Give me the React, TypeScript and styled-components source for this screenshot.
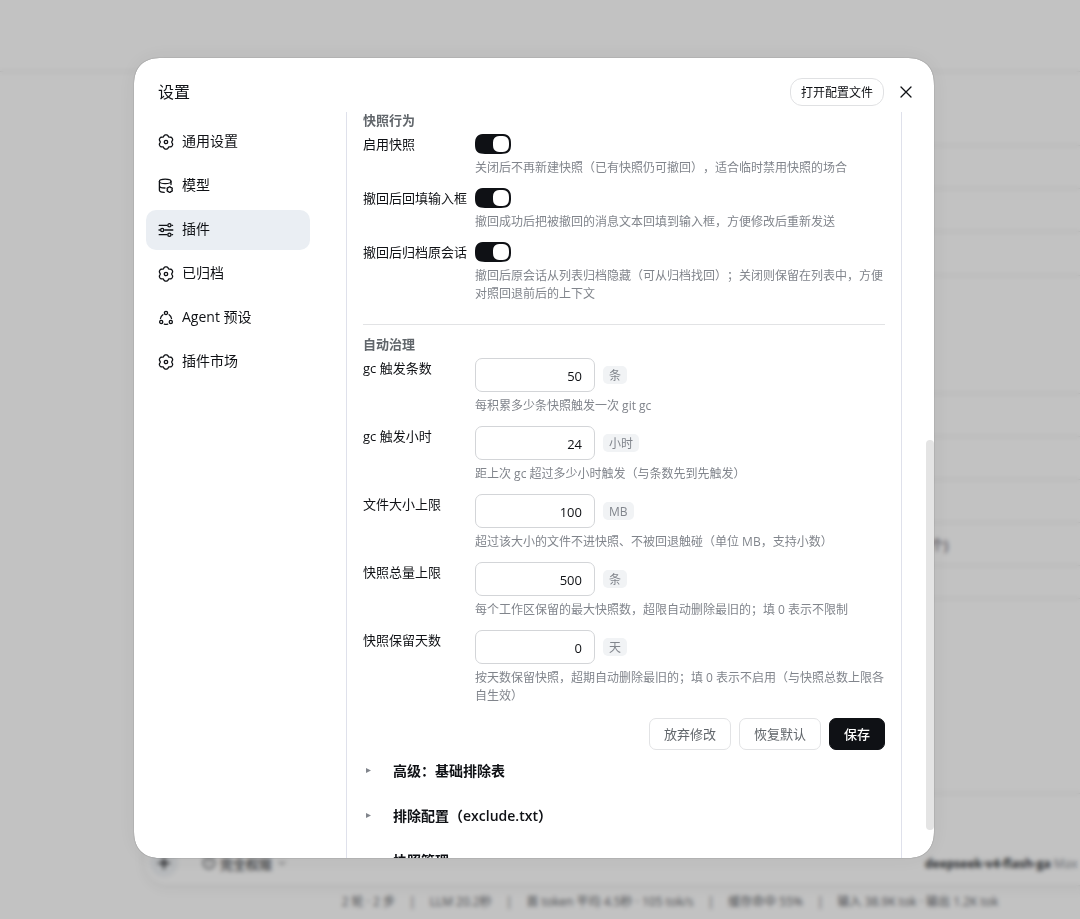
import React from "react";
import styled, { createGlobalStyle } from "styled-components";

const ink = "#0f1115";
const muted = "#81858c";
const secondary = "#61666b";
const panelLine = "#dfe1eb";

const GlobalStyle = createGlobalStyle`
  *, *::before, *::after { box-sizing: border-box; }
  body {
    margin: 0;
    background: #fff;
    color: ${ink};
    font-family: "Open Sans", "Noto Sans CJK SC", sans-serif;
    font-size: 14px;
    text-spacing-trim: space-all;
  }
  button, input { font: inherit; color: inherit; }
  h1, h2, p { margin: 0; }
`;

/* ---------- page behind the dialog ---------- */

const Page = styled.div`
  display: flex;
  flex-direction: column;
  height: 100vh;
  overflow: hidden;
`;

const TopBar = styled.header`
  flex: none;
  height: 72px;
  border-bottom: 1px solid #e6e6e6;
`;

const Thread = styled.main`
  flex: 1;
  min-height: 0;
  overflow: hidden;
  padding: 30px 0 0 170px;
`;

const ResultList = styled.ul`
  list-style: none;
  margin: 0;
  padding: 0;
`;

const ResultRow = styled.li<{ $h: number }>`
  display: flex;
  align-items: center;
  height: ${(p) => p.$h}px;
  padding-left: 760px;
  border-bottom: 1px solid #e9e9e9;
  color: #3a3244;
`;

const Composer = styled.section`
  flex: none;
  display: flex;
  align-items: flex-end;
  height: 93px;
  margin-left: 143px;
  margin-right: -60px;
  padding: 0 60px 8px 6px;
  border: 1px solid #eaeaea;
  border-radius: 24px;
  box-shadow: 0 4px 12px rgba(0, 0, 0, 0.04);
`;

const ComposerRow = styled.div`
  display: flex;
  align-items: center;
  flex: 1;
  height: 28px;
  font-size: 13px;
  white-space: nowrap;
`;

const RoundAdd = styled.span`
  display: grid;
  place-items: center;
  width: 28px;
  height: 28px;
  margin-right: 24px;
  border-radius: 50%;
  background: #f0f3f6;
`;

const Access = styled.span`
  display: flex;
  align-items: center;
  gap: 4px;
  font-weight: 500;
  color: #3f4347;
`;

const Model = styled.span`
  margin-left: auto;
  width: 154px;
  font-size: 12px;
  color: ${muted};

  b { color: #33363a; }
`;

const StatusBar = styled.footer`
  flex: none;
  display: flex;
  justify-content: center;
  gap: 14px;
  height: 33px;
  padding-left: 260px;
  font-size: 12px;
  line-height: 32px;
  color: #5f6368;
  white-space: nowrap;
`;

/* ---------- dialog ---------- */

const Overlay = styled.div`
  position: fixed;
  inset: 0;
  display: flex;
  align-items: flex-start;
  justify-content: center;
  padding: 58px 12px 0 0;
  background: rgba(0, 0, 0, 0.24);
  backdrop-filter: blur(2px);
`;

const Dialog = styled.section`
  display: flex;
  flex-direction: column;
  width: min(800px, 100%);
  height: min(800px, calc(100vh - 116px));
  overflow: hidden;
  border-radius: 28px;
  corner-shape: superellipse(1.3);
  background: #fff;
  box-shadow: 0 0 1px rgba(0, 0, 0, 0.6), 0 0 24px rgba(0, 0, 0, 0.06);
`;

const DialogHeader = styled.header`
  flex: none;
  display: flex;
  align-items: center;
  gap: 10px;
  padding: 20px 16px 6px 24px;
`;

const DialogTitle = styled.h1`
  flex: 1;
  font-size: 16px;
  line-height: 28px;
  font-weight: 400;
`;

const OpenConfig = styled.button`
  height: 28px;
  padding: 2px 10px 0;
  border: 1px solid #e0e1e3;
  border-radius: 12px;
  background: #fff;
  font-size: 12px;
  line-height: 24px;
`;

const CloseButton = styled.button`
  display: grid;
  place-items: center;
  width: 24px;
  height: 24px;
  padding: 0;
  border: 0;
  background: none;
`;

const DialogBody = styled.div`
  flex: 1;
  display: flex;
  min-height: 0;
`;

const Nav = styled.nav`
  flex: none;
  display: flex;
  flex-direction: column;
  gap: 4px;
  width: 212px;
  padding: 10px 36px 0 12px;
`;

const NavItem = styled.button<{ $active?: boolean }>`
  display: flex;
  align-items: center;
  gap: 8px;
  height: 40px;
  padding: 0 12px;
  border: 0;
  border-radius: 10px;
  background: ${(p) => (p.$active ? "#eaeef3" : "transparent")};
  text-align: left;
`;

const NavText = styled.span`
  padding-bottom: 2px;
  line-height: 20px;
`;

const Panel = styled.div`
  flex: 1;
  min-width: 0;
  overflow: hidden;
  padding: 0 16px;
  border: solid ${panelLine};
  border-width: 0 1px;
`;

const ScrollTrack = styled.div`
  flex: none;
  display: flex;
  flex-direction: column;
  align-items: flex-end;
  width: 32px;
  padding: 328px 0 28px;
`;

const ScrollThumb = styled.div`
  flex: 1;
  width: 8px;
  border-radius: 4px;
  background: #e4e4e4;
`;

const Section = styled.section`
  display: flex;
  flex-direction: column;
  gap: 11px;

  & + & {
    margin-top: 21px;
    padding-top: 11px;
    border-top: 1px solid #e2e3e5;
  }
`;

const SectionTitle = styled.h2`
  margin-bottom: -5px;
  font-size: 13px;
  line-height: 16px;
  font-weight: 600;
  color: ${secondary};
`;

const Field = styled.div`
  display: grid;
  grid-template-columns: 104px 1fr;
  column-gap: 8px;
`;

const FieldLabel = styled.label`
  font-size: 13px;
  line-height: 20px;
  white-space: nowrap;
`;

const FieldControl = styled.div`
  display: flex;
  flex-direction: column;
  gap: 5px;
`;

const Hint = styled.p`
  font-size: 12px;
  line-height: 18px;
  color: ${muted};
`;

const Switch = styled.input`
  appearance: none;
  display: block;
  width: 36px;
  height: 20px;
  margin: 0;
  padding: 2px;
  border-radius: 10px;
  corner-shape: superellipse(1.5);
  background: #d5d7da;

  &::before {
    content: "";
    display: block;
    width: 16px;
    height: 16px;
    border-radius: 8px;
    corner-shape: superellipse(1.5);
    background: #fff;
  }

  &:checked { background: ${ink}; }
  &:checked::before { margin-left: auto; }
`;

const NumberRow = styled.div`
  display: flex;
  align-items: center;
  gap: 8px;
`;

const NumberBox = styled.input`
  width: 120px;
  height: 34px;
  padding: 2px 12px 0;
  border: 1px solid #d3d5d8;
  border-radius: 7px;
  background: #fff;
  font-size: 13px;
  text-align: right;
`;

const Unit = styled.span`
  height: 18px;
  padding: 0 6px;
  border-radius: 5px;
  background: #f1f3f5;
  font-size: 12px;
  line-height: 20px;
  color: ${muted};
`;

const Actions = styled.div`
  display: flex;
  justify-content: flex-end;
  gap: 8px;
  margin-top: 13px;
`;

const ActionButton = styled.button<{ $primary?: boolean }>`
  height: 32px;
  padding: 0 14px 2px;
  border: 1px solid ${(p) => (p.$primary ? ink : "#e2e3e5")};
  border-radius: 7px;
  background: ${(p) => (p.$primary ? ink : "#fff")};
  color: ${(p) => (p.$primary ? "#fff" : secondary)};
  font-size: 13px;
  font-weight: ${(p) => (p.$primary ? 500 : 400)};
`;

const Fold = styled.details`
  summary {
    display: flex;
    align-items: center;
    gap: 22px;
    height: 45px;
    padding: 0 0 4px 3px;
    list-style: none;
    font-size: 14px;
    line-height: 20px;
    font-weight: 600;
  }
`;

/* ---------- icons ---------- */

const lobed = (cx: number, cy: number, r: number, depth: number) => {
  const steps = 72;
  const points = Array.from({ length: steps }, (_, i) => {
    const t = (i / steps) * Math.PI * 2;
    const a = t - Math.PI / 2;
    const rr = r + depth * (Math.cos(6 * t) - 0.2 * Math.cos(12 * t));
    return `${(cx + rr * Math.cos(a)).toFixed(2)} ${(cy + rr * Math.sin(a)).toFixed(2)}`;
  });
  return `M${points.join("L")}Z`;
};

const Icon = ({ children, size = 16 }: { children: React.ReactNode; size?: number }) => (
  <svg
    width={size}
    height={size}
    viewBox="0 0 16 16"
    fill="none"
    stroke="currentColor"
    strokeWidth="1.3"
    strokeLinecap="round"
    strokeLinejoin="round"
    aria-hidden="true"
  >
    {children}
  </svg>
);

const GearIcon = () => (
  <Icon>
    <path d={lobed(8, 8, 6.6, 0.75)} />
    <circle cx="8" cy="8" r="1.7" />
  </Icon>
);

const ModelIcon = () => (
  <Icon>
    <ellipse cx="7.2" cy="3.4" rx="5.8" ry="2.2" />
    <path d="M1.4 3.4v8.8c0 1.2 2 2 4.8 2.2M13 3.4v3.2M1.4 7.8c0 1.3 2.4 2.2 5.6 2.2" />
    <path d={lobed(11.7, 11.6, 2.6, 0.3)} />
  </Icon>
);

const PluginIcon = () => (
  <Icon>
    <path d="M1.2 3.3h7.6M14 3.3h.6M6.8 8h8M1 8h.6M1.2 12.7h7.6M14 12.7h.6" />
    <circle cx="11.4" cy="3.3" r="1.6" />
    <circle cx="4.2" cy="8" r="1.6" />
    <circle cx="11.4" cy="12.7" r="1.6" />
  </Icon>
);

const AgentIcon = () => (
  <Icon>
    <circle cx="8" cy="2.9" r="1.6" />
    <circle cx="3.2" cy="11.9" r="1.6" />
    <circle cx="12.8" cy="11.9" r="1.6" />
    <path d="M4.9 4.7A5.6 5.6 0 0 0 2.5 8.5M11.1 4.7A5.6 5.6 0 0 1 13.5 8.5M6.3 14.2A5.6 5.6 0 0 0 9.7 14.2" />
  </Icon>
);

/* ---------- data ---------- */

const navItems = [
  { label: "通用设置", icon: GearIcon },
  { label: "模型", icon: ModelIcon },
  { label: "插件", icon: PluginIcon, active: true },
  { label: "已归档", icon: GearIcon },
  { label: "Agent 预设", icon: AgentIcon },
  { label: "插件市场", icon: GearIcon },
];

const switches = [
  { id: "enable", label: "启用快照", hint: "关闭后不再新建快照（已有快照仍可撤回），适合临时禁用快照的场合" },
  { id: "refill", label: "撤回后回填输入框", hint: "撤回成功后把被撤回的消息文本回填到输入框，方便修改后重新发送" },
  {
    id: "archive",
    label: "撤回后归档原会话",
    hint: "撤回后原会话从列表归档隐藏（可从归档找回）；关闭则保留在列表中，方便对照回退前后的上下文",
  },
];

const limits = [
  { id: "gc-count", label: "gc 触发条数", value: "50", unit: "条", hint: "每积累多少条快照触发一次 git gc" },
  { id: "gc-hours", label: "gc 触发小时", value: "24", unit: "小时", hint: "距上次 gc 超过多少小时触发（与条数先到先触发）" },
  { id: "file-size", label: "文件大小上限", value: "100", unit: "MB", hint: "超过该大小的文件不进快照、不被回退触碰（单位 MB，支持小数）" },
  { id: "total", label: "快照总量上限", value: "500", unit: "条", hint: "每个工作区保留的最大快照数，超限自动删除最旧的；填 0 表示不限制" },
  { id: "days", label: "快照保留天数", value: "0", unit: "天", hint: "按天数保留快照，超期自动删除最旧的；填 0 表示不启用（与快照总数上限各自生效）" },
];

const folds = ["高级：基础排除表", "排除配置（exclude.txt）", "快照管理"];

const rows = [
  { h: 44 }, { h: 43 }, { h: 43 }, { h: 44 }, { h: 118 }, { h: 43 }, { h: 43 }, { h: 43 },
  { h: 43, text: "个)" }, { h: 33 },
];

const stats = ["2 轮 · 2 步", "LLM 20.2秒", "首 token 平均 4.5秒 · 105 tok/s", "缓存命中 55%", "输入 38.9K tok · 输出 1.2K tok"];

export default function App() {
  return (
    <>
      <GlobalStyle />
      <Page aria-hidden="true">
        <TopBar />
        <Thread>
          <ResultList>
            {rows.map((r, i) => (
              <ResultRow key={i} $h={r.h}>{r.text}</ResultRow>
            ))}
          </ResultList>
        </Thread>
        <Composer>
          <ComposerRow>
            <RoundAdd>
              <Icon size={14}><path d="M8 2v12M2 8h12" strokeWidth="2" /></Icon>
            </RoundAdd>
            <Access>
              <Icon size={14}><circle cx="8" cy="8" r="6.5" /><path d="M8 5v4" /></Icon>
              完全权限
              <Icon size={12}><path d="M4 6l4 4 4-4" /></Icon>
            </Access>
            <Model><b>deepseek-v4-flash-ga</b> Max</Model>
          </ComposerRow>
        </Composer>
        <StatusBar>
          {stats.map((s, i) => (
            <React.Fragment key={s}>
              {i > 0 && <span>|</span>}
              <span>{s}</span>
            </React.Fragment>
          ))}
        </StatusBar>
      </Page>

      <Overlay>
        <Dialog role="dialog" aria-modal="true" aria-labelledby="settings-title">
          <DialogHeader>
            <DialogTitle id="settings-title">设置</DialogTitle>
            <OpenConfig type="button">打开配置文件</OpenConfig>
            <CloseButton type="button" aria-label="关闭">
              <Icon><path d="M3 3l10 10M13 3L3 13" /></Icon>
            </CloseButton>
          </DialogHeader>
          <DialogBody>
            <Nav>
              {navItems.map(({ label, icon: Glyph, active }) => (
                <NavItem key={label} type="button" $active={active}>
                  <Glyph />
                  <NavText>{label}</NavText>
                </NavItem>
              ))}
            </Nav>
            <Panel>
              <Section>
                <SectionTitle>快照行为</SectionTitle>
                {switches.map((s) => (
                  <Field key={s.id}>
                    <FieldLabel htmlFor={s.id}>{s.label}</FieldLabel>
                    <FieldControl>
                      <Switch id={s.id} type="checkbox" role="switch" defaultChecked />
                      <Hint>{s.hint}</Hint>
                    </FieldControl>
                  </Field>
                ))}
              </Section>
              <Section>
                <SectionTitle>自动治理</SectionTitle>
                {limits.map((l) => (
                  <Field key={l.id}>
                    <FieldLabel htmlFor={l.id}>{l.label}</FieldLabel>
                    <FieldControl>
                      <NumberRow>
                        <NumberBox id={l.id} inputMode="decimal" defaultValue={l.value} />
                        <Unit>{l.unit}</Unit>
                      </NumberRow>
                      <Hint>{l.hint}</Hint>
                    </FieldControl>
                  </Field>
                ))}
              </Section>
              <Actions>
                <ActionButton type="button">放弃修改</ActionButton>
                <ActionButton type="button">恢复默认</ActionButton>
                <ActionButton type="button" $primary>保存</ActionButton>
              </Actions>
              {folds.map((f) => (
                <Fold key={f}>
                  <summary>
                    <svg width="5" height="5" viewBox="0 0 5 5" fill={muted} aria-hidden="true">
                      <path d="M0 0l5 2.5L0 5z" />
                    </svg>
                    {f}
                  </summary>
                </Fold>
              ))}
            </Panel>
            <ScrollTrack>
              <ScrollThumb />
            </ScrollTrack>
          </DialogBody>
        </Dialog>
      </Overlay>
    </>
  );
}
